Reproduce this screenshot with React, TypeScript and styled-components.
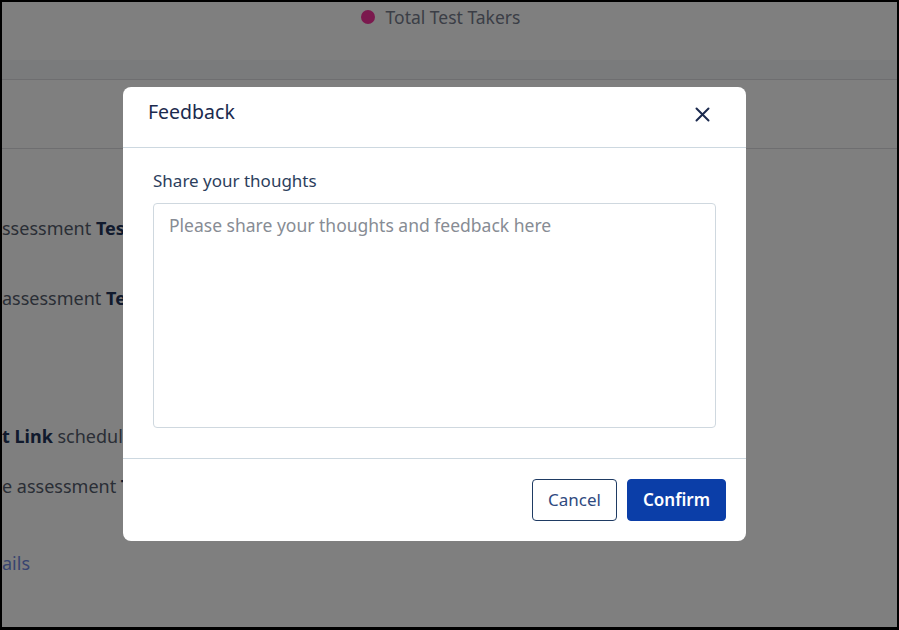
import * as React from 'react'
import styled, { createGlobalStyle } from 'styled-components'

const GlobalStyle = createGlobalStyle`
  html, body {
    margin: 0;
    padding: 0;
    background: #000;
  }
  * {
    box-sizing: border-box;
  }
`

// rows of the feed behind the dialog, only their left part shows
const activity = [
  { id: 1, before: 'ssessment ', bold: 'Test Automation', after: ' on time', gap: 67 },
  { id: 2, before: 'assessment ', bold: 'Test Automation', after: ' today', gap: 46 },
  { id: 3, before: '', bold: 't Link', after: ' scheduled for the candidate', gap: 114 },
  { id: 4, before: 'e assessment  ', bold: 'Test Automation', after: '', gap: 26 },
]

const Feedback = () => {
  const [text, setText] = React.useState('')

  return (
    <Overlay>
      <Modal role="dialog" aria-labelledby="feedback-title">
        <ModalHeader>
          <Title id="feedback-title">Feedback</Title>
          <CloseButton aria-label="Close">
            <svg width="15" height="15" viewBox="0 0 15 15" fill="none">
              <path
                d="M1.5 1.5L13.5 13.5M13.5 1.5L1.5 13.5"
                stroke="#1b2a4e"
                strokeWidth="2"
                strokeLinecap="round"
              />
            </svg>
          </CloseButton>
        </ModalHeader>
        <ModalBody>
          <Label htmlFor="feedback-text">Share your thoughts</Label>
          <TextArea
            id="feedback-text"
            value={text}
            onChange={e => setText(e.target.value)}
            placeholder="Please share your thoughts and feedback here"
          />
        </ModalBody>
        <ModalFooter>
          <Button>Cancel</Button>
          <Button primary>Confirm</Button>
        </ModalFooter>
      </Modal>
    </Overlay>
  )
}

const App = () => (
  <>
    <GlobalStyle />
    <Frame>
      <Page>
        <Legend>
          <Dot />
          <span>Total Test Takers</span>
        </Legend>
        <TabBand />
        <SubBar />
        <ActivityList>
          {activity.map(item => (
            <ActivityRow key={item.id} gap={item.gap}>
              {item.before}
              <b>{item.bold}</b>
              {item.after}
            </ActivityRow>
          ))}
          <DetailsLink gap={53}>ails</DetailsLink>
        </ActivityList>
        <Feedback />
      </Page>
    </Frame>
  </>
)

export default App

const Frame = styled.div`
  width: 899px;
  height: 630px;
  border: 2px solid #000;
  border-bottom-width: 3px;
  background: #000;
`

const Page = styled.div`
  position: relative;
  width: 100%;
  height: 100%;
  overflow: hidden;
  background: #fff;
  font-family: 'Noto Sans', 'Open Sans', sans-serif;
  color: #5a6272;
`

const Legend = styled.div`
  height: 58px;
  display: flex;
  justify-content: center;
  align-items: flex-start;
  padding: 3px 18px 0 0;
  gap: 11px;
  font-size: 17.5px;
  line-height: 24px;
  color: #767d8d;
`

const Dot = styled.span`
  width: 14px;
  height: 14px;
  margin-top: 5px;
  border-radius: 50%;
  background: #f6339c;
`

const TabBand = styled.div`
  height: 20px;
  background: #f4f6f9;
  border-bottom: 1px solid #dcdde0;
`

const SubBar = styled.div`
  height: 69px;
  border-bottom: 1px solid #dcdde0;
`

const ActivityList = styled.div`
  display: flex;
  flex-direction: column;
  font-size: 18px;
  line-height: 24px;
`

const ActivityRow = styled.div<{ gap: number }>`
  margin-top: ${p => p.gap}px;
  white-space: nowrap;
  color: #545c6c;
  b {
    color: #22345a;
    font-weight: 700;
  }
`

const DetailsLink = styled.a<{ gap: number }>`
  margin-top: ${p => p.gap}px;
  white-space: nowrap;
  color: #7088e0;
  cursor: pointer;
`

const Overlay = styled.div`
  position: absolute;
  inset: 0;
  display: flex;
  align-items: center;
  justify-content: center;
  padding: 0 30px 2px 0;
  background: rgba(0, 0, 0, 0.5);
`

const Modal = styled.div`
  width: 623px;
  height: 454px;
  display: flex;
  flex-direction: column;
  background: #fff;
  border-radius: 8px;
  overflow: hidden;
`

const ModalHeader = styled.div`
  height: 61px;
  flex: 0 0 auto;
  display: flex;
  align-items: flex-start;
  justify-content: space-between;
  padding: 12px 32px 0 25px;
  border-bottom: 1px solid #cdd8e0;
`

const Title = styled.h2`
  margin: 0;
  font-size: 19.5px;
  line-height: 26px;
  font-weight: 400;
  color: #1b2a4e;
`

const CloseButton = styled.button`
  width: 24px;
  height: 24px;
  margin-top: 4px;
  padding: 0;
  border: none;
  background: none;
  display: flex;
  align-items: center;
  justify-content: center;
  cursor: pointer;
`

const ModalBody = styled.div`
  flex: 1;
  display: flex;
  flex-direction: column;
  padding: 21px 30px 30px;
  border-bottom: 1px solid #cdd8e0;
`

const Label = styled.label`
  font-size: 17px;
  line-height: 24px;
  color: #2c3e5c;
  margin-bottom: 10px;
`

const TextArea = styled.textarea`
  flex: 1;
  width: 100%;
  resize: none;
  padding: 9px 15px;
  border: 1px solid #cfd8df;
  border-radius: 4px;
  font-family: 'Noto Sans', 'Open Sans', sans-serif;
  font-size: 17.5px;
  line-height: 24px;
  color: #2c3e5c;
  outline: none;
  &::placeholder {
    color: #878c94;
  }
`

const ModalFooter = styled.div`
  flex: 0 0 auto;
  display: flex;
  justify-content: flex-end;
  gap: 10px;
  padding: 20px;
`

const Button = styled.button<{ primary?: boolean }>`
  height: 42px;
  padding: 0 15px;
  border-radius: 4px;
  font-family: 'Noto Sans', 'Open Sans', sans-serif;
  font-size: 17px;
  cursor: pointer;
  border: 1px solid ${p => (p.primary ? '#0b3ea8' : '#1f3b63')};
  background: ${p => (p.primary ? '#0b3ea8' : '#fff')};
  color: ${p => (p.primary ? '#fff' : '#2f4a80')};
  font-weight: ${p => (p.primary ? 600 : 400)};
`
